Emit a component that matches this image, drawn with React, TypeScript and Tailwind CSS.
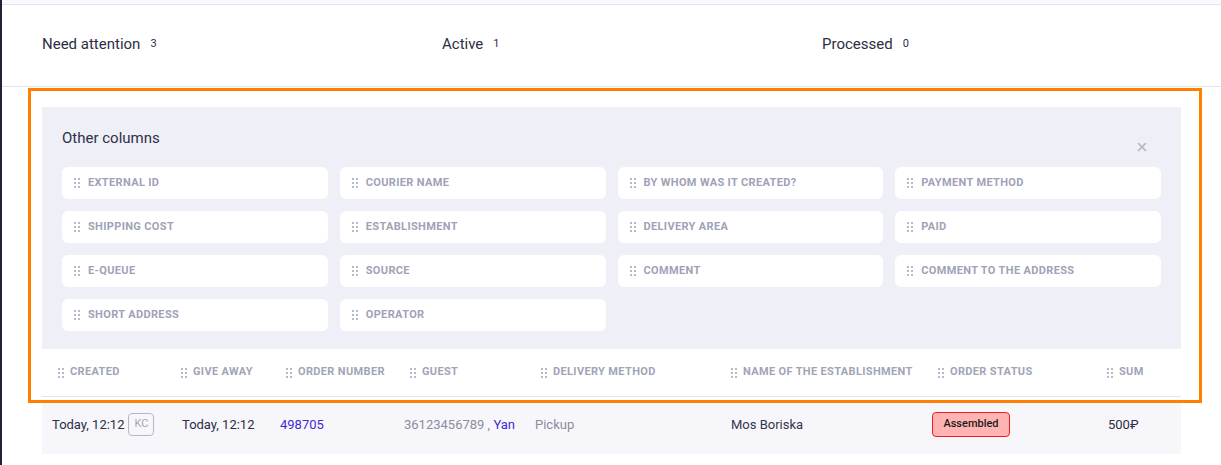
import React from "react";
import { X } from "lucide-react";

const tabs = [
  { label: "Need attention", count: 3, w: "w-[400px]" },
  { label: "Active", count: 1, w: "w-[380px]" },
  { label: "Processed", count: 0, w: "w-[300px]" },
];

const otherColumns = [
  "External ID",
  "Courier name",
  "By whom was it created?",
  "Payment method",
  "Shipping cost",
  "Establishment",
  "Delivery area",
  "Paid",
  "E-queue",
  "Source",
  "Comment",
  "Comment to the address",
  "Short address",
  "Operator",
];

const columns = [
  { label: "Created", w: "w-[130px]", pad: "pl-[16px]" },
  { label: "Give away", w: "w-[98px]", pad: "pl-[9px]" },
  { label: "Order number", w: "w-[124px]", pad: "pl-[16px]" },
  { label: "Guest", w: "w-[131px]", pad: "pl-[16px]" },
  { label: "Delivery method", w: "w-[196px]", pad: "pl-[16px]" },
  { label: "Name of the establishment", w: "w-[201px]", pad: "pl-[10px]" },
  { label: "Order status", w: "w-[176px]", pad: "pl-[16px]" },
  { label: "Sum", w: "w-[84px]", pad: "pl-[9px]" },
];

function DragDots() {
  return (
    <svg width="6" height="10" viewBox="0 0 6 10" className="shrink-0">
      {[0, 4, 8].map((y) => (
        <g key={y} fill="#b6b9c9">
          <rect x="0" y={y} width="2" height="2" />
          <rect x="4" y={y} width="2" height="2" />
        </g>
      ))}
    </svg>
  );
}

export default function App() {
  return (
    <div className="flex w-full h-[465px] bg-white overflow-hidden font-['Roboto',sans-serif]">
      {/* sidebar edge */}
      <div className="w-[2px] shrink-0 bg-[#1f2333]" />

      <main className="flex-1 flex flex-col min-w-0">
        <div className="h-[5px] shrink-0 bg-[#f9f8fd] border-b border-[#e2e2f0]" />

        {/* Tabs */}
        <div className="h-[82px] shrink-0 flex items-center pl-[40px] pb-[2px] border-b border-[#e4e4ee]">
          {tabs.map((t) => (
            <div key={t.label} className={`${t.w} flex items-center gap-[10px]`}>
              <span className="text-[15px] text-[#2b2e45]">{t.label}</span>
              <span className="text-[11px] text-[#2b2e45]">{t.count}</span>
            </div>
          ))}
        </div>

        {/* Content */}
        <div className="relative px-[40px] pt-[20px]">
          {/* Other columns panel */}
          <section className="relative bg-[#eeeff7] px-[20px] pt-[21px] pb-[18px]">
            <h3 className="text-[15px] leading-[20px] text-[#2d3047]">Other columns</h3>
            <button className="absolute right-[32px] top-[33px] text-[#b3b6c6]">
              <X className="w-[14px] h-[14px]" strokeWidth={2.75} />
            </button>
            <div className="mt-[19px] grid grid-cols-4 gap-[12px]">
              {otherColumns.map((c) => (
                <div
                  key={c}
                  className="h-[32px] bg-white rounded-[6px] flex items-center gap-[8px] pl-[12px]"
                >
                  <DragDots />
                  <span className="text-[11px] font-bold uppercase text-[#9fa2b7] tracking-[0.35px]">
                    {c}
                  </span>
                </div>
              ))}
            </div>
          </section>

          {/* Table header */}
          <div className="flex h-[48px] items-center border-b border-[#e4e4ea]">
            {columns.map((c) => (
              <div key={c.label} className={`${c.w} ${c.pad} flex items-center gap-[6px] shrink-0`}>
                <DragDots />
                <span className="text-[11px] font-bold uppercase text-[#a1a4b7] tracking-[0.35px] whitespace-nowrap">
                  {c.label}
                </span>
              </div>
            ))}
          </div>

          {/* Row */}
          <div className="mt-[6px] flex h-[51px] pb-[8px] items-center bg-[#f7f7fb] text-[13px]">
            <div className="w-[130px] pl-[10px] flex items-center gap-[4px] shrink-0">
              <span className="text-[#2b2e45]">Today, 12:12</span>
              <span className="w-[26px] h-[23px] border border-[#b4b7c6] rounded-[4px] flex items-center justify-center text-[11px] text-[#a3a6b8]">
                KC
              </span>
            </div>
            <div className="w-[98px] pl-[10px] shrink-0 text-[#2b2e45]">Today, 12:12</div>
            <div className="w-[124px] pl-[10px] shrink-0 text-[#3d2bd1]">498705</div>
            <div className="w-[131px] pl-[10px] shrink-0 text-[#8b8d9d] whitespace-nowrap">
              36123456789 , <span className="text-[#3d2bd1]">Yan</span>
            </div>
            <div className="w-[196px] pl-[10px] shrink-0 text-[#8b8d9d]">Pickup</div>
            <div className="w-[201px] pl-[10px] shrink-0 text-[#33364d]">Mos Boriska</div>
            <div className="w-[176px] pl-[10px] shrink-0">
              <span className="inline-flex items-center justify-center w-[78px] h-[25px] rounded-[4px] border border-[#f21d1d] bg-[#ffb3b3] text-[11px] font-medium text-[#1a1a1a]">
                Assembled
              </span>
            </div>
            <div className="w-[84px] pl-[10px] shrink-0 text-[#2b2e45]">500₽</div>
          </div>

          {/* highlight overlay */}
          <div className="pointer-events-none absolute left-[26px] top-[1px] w-[1174px] h-[315px] border-[3px] border-[#ff8000]" />
        </div>
      </main>
    </div>
  );
}
